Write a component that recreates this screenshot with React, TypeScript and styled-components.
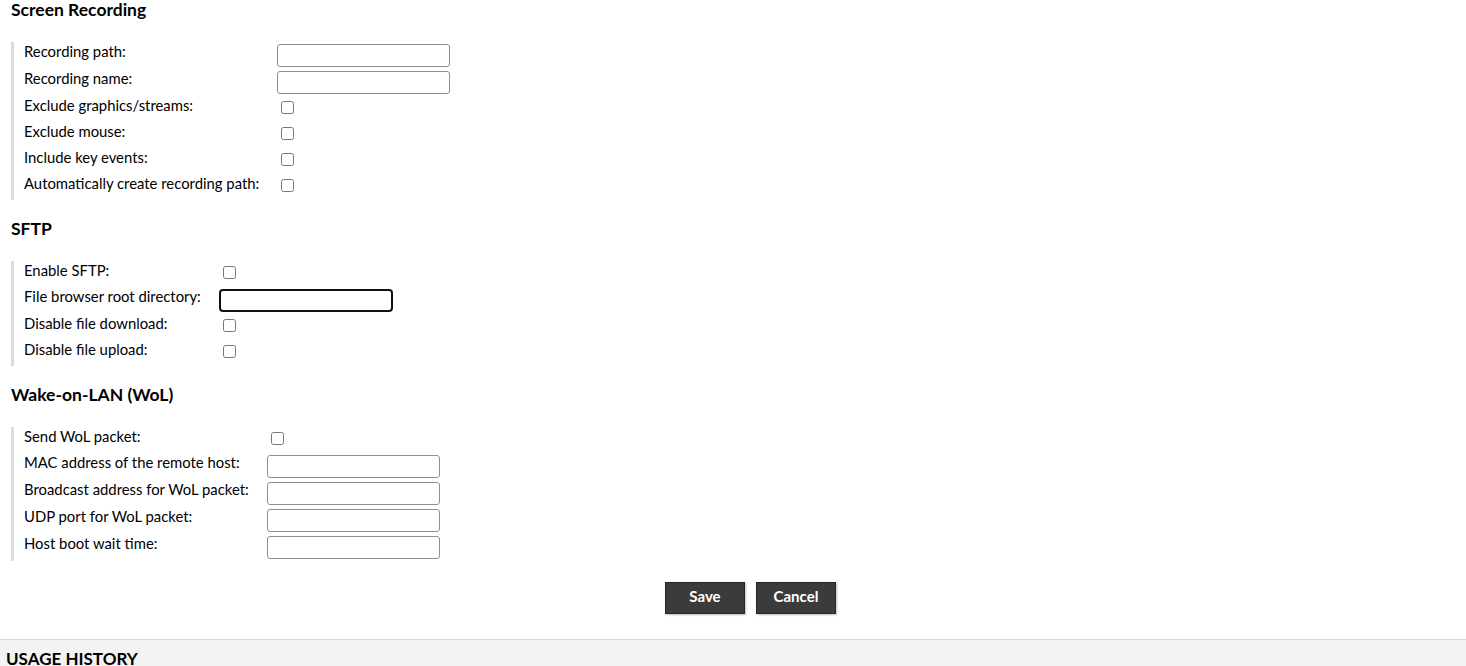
import styled, { createGlobalStyle } from "styled-components";

const GlobalStyle = createGlobalStyle`
  html, body {
    margin: 0;
    padding: 0;
    background: #fff;
    color: #000;
    font-family: "Lato", "Noto Sans", sans-serif;
    font-size: 15px;
  }
`;

const Page = styled.div`
  width: 1466px;
  height: 666px;
  overflow: hidden;
`;

const ConnectionForm = styled.div`
  padding-left: 11px;
`;

const Section = styled.section`
  & + & {
    margin-top: 19px;
  }
`;

const SectionTitle = styled.h3`
  margin: 0 0 22px;
  font-size: 17.5px;
  line-height: 20px;
  font-weight: 700;
`;

const Fields = styled.div`
  display: grid;
  grid-template-columns: max-content max-content;
  justify-content: start;
  border-left: 3px solid #dcdcdc;
  padding-left: 10px;
`;

const Label = styled.div`
  padding: 1px 18px 0 0;
  font-size: 14.85px;
  line-height: 17px;
  white-space: nowrap;
`;

const FieldCell = styled.div`
  display: flex;
  align-items: flex-start;
`;

const TextInput = styled.input<{ $focused?: boolean }>`
  box-sizing: border-box;
  width: ${(p) => (p.$focused ? "174px" : "173px")};
  height: 23px;
  margin: 2px 0;
  padding: 0 4px;
  border: ${(p) => (p.$focused ? "2px solid #111" : "1px solid #8f8f8f")};
  border-radius: ${(p) => (p.$focused ? "4px" : "3px")};
  background: #fff;
  font-family: inherit;
  font-size: 14px;
  outline: none;
`;

const CheckBox = styled.input`
  width: 13px;
  height: 13px;
  margin: 5px 3px 8px 4px;
`;

const ActionButtons = styled.div`
  display: flex;
  justify-content: center;
  gap: 11px;
  margin: 21px 0 25px;
  padding-left: 35px;
`;

const Button = styled.button`
  box-sizing: border-box;
  width: 80px;
  height: 32px;
  padding: 0 0 4px;
  background: #3b3b3b;
  color: #fff;
  border: 1px solid #262626;
  box-shadow: 1px 1px 2px rgba(0, 0, 0, 0.25);
  font-family: inherit;
  font-size: 15px;
  line-height: 18px;
  font-weight: 700;
  cursor: pointer;
`;

const HistoryPanel = styled.div`
  border-top: 1px solid #d8d8d8;
  background: #f3f3f3;
  padding: 8px 6px;
  height: 60px;
`;

const HistoryTitle = styled.h2`
  margin: 0;
  font-size: 17px;
  line-height: 22px;
  font-weight: 700;
`;

type Field = { label: string; kind: "text" | "checkbox"; focused?: boolean };

const sections: { title: string; fields: Field[] }[] = [
  {
    title: "Screen Recording",
    fields: [
      { label: "Recording path:", kind: "text" },
      { label: "Recording name:", kind: "text" },
      { label: "Exclude graphics/streams:", kind: "checkbox" },
      { label: "Exclude mouse:", kind: "checkbox" },
      { label: "Include key events:", kind: "checkbox" },
      { label: "Automatically create recording path:", kind: "checkbox" }
    ]
  },
  {
    title: "SFTP",
    fields: [
      { label: "Enable SFTP:", kind: "checkbox" },
      { label: "File browser root directory:", kind: "text", focused: true },
      { label: "Disable file download:", kind: "checkbox" },
      { label: "Disable file upload:", kind: "checkbox" }
    ]
  },
  {
    title: "Wake-on-LAN (WoL)",
    fields: [
      { label: "Send WoL packet:", kind: "checkbox" },
      { label: "MAC address of the remote host:", kind: "text" },
      { label: "Broadcast address for WoL packet:", kind: "text" },
      { label: "UDP port for WoL packet:", kind: "text" },
      { label: "Host boot wait time:", kind: "text" }
    ]
  }
];

const App = () => {
  return (
    <Page>
      <GlobalStyle />
      <ConnectionForm>
        {sections.map((section) => (
          <Section key={section.title}>
            <SectionTitle>{section.title}</SectionTitle>
            <Fields>
              {section.fields.map((field) => [
                <Label key={field.label + "-l"}>{field.label}</Label>,
                <FieldCell key={field.label + "-f"}>
                  {field.kind === "text" ? (
                    <TextInput type="text" $focused={field.focused} />
                  ) : (
                    <CheckBox type="checkbox" />
                  )}
                </FieldCell>
              ])}
            </Fields>
          </Section>
        ))}
      </ConnectionForm>
      <ActionButtons>
        <Button>Save</Button>
        <Button>Cancel</Button>
      </ActionButtons>
      <HistoryPanel>
        <HistoryTitle>USAGE HISTORY</HistoryTitle>
      </HistoryPanel>
    </Page>
  );
};

export default App;
